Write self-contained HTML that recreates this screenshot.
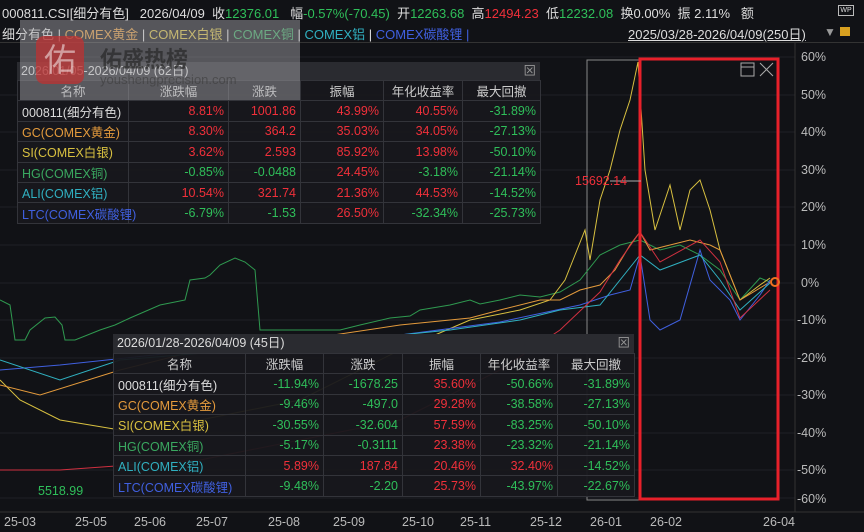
<!DOCTYPE html><html><head><meta charset="utf-8"><style>
*{margin:0;padding:0;box-sizing:border-box}
body{width:864px;height:532px;background:#111216;font-family:"Liberation Sans","Noto Sans CJK SC",sans-serif;color:#ddd;position:relative;overflow:hidden;font-size:12px}
.a{position:absolute;white-space:nowrap}
.g{color:#2fbf5a}.r{color:#f0303a}
table{border-collapse:collapse;position:absolute;background:rgba(24,24,28,.95);font-size:12.5px;table-layout:fixed}
td{border:1px solid #33343a;height:20.4px;padding:0 4px;text-align:right;white-space:nowrap;overflow:hidden}
td:first-child{text-align:left}
tr.h td{text-align:center;color:#ccc}
.tt{position:absolute;background:#2a2b30;color:#ddd;font-size:12.5px;padding-left:4px;line-height:18px}
.ax{color:#bbb;font-size:12.5px}
</style></head><body>
<div class="a" style="left:2px;top:3px;font-size:13px">000811.CSI[细分有色] &nbsp; 2026/04/09 &nbsp;收<span class="g">12376.01</span> &nbsp; 幅<span class="g">-0.57%(-70.45)</span> &nbsp;开<span class="g">12263.68</span> &nbsp;高<span class="r">12494.23</span> &nbsp;低<span class="g">12232.08</span> &nbsp;换0.00% &nbsp;振 2.11% &nbsp; 额</div>
<div class="a" style="left:2px;top:24px;font-size:13px">细分有色 | <span style="color:#e39a3c">COMEX黄金</span> | <span style="color:#d8c040">COMEX白银</span> | <span style="color:#3aa860">COMEX铜</span> | <span style="color:#30b0c0">COMEX铝</span> | <span style="color:#4060e0">COMEX碳酸锂</span> <span style="color:#4060e0">|</span></div>
<div class="a" style="left:628px;top:24px;font-size:13px;text-decoration:underline">2025/03/28-2026/04/09(250日)</div>
<div class="a" style="left:824px;top:25px;color:#999">▼</div>
<div class="a" style="left:840px;top:27px;width:10px;height:9px;background:#d8a020"></div>
<div class="a" style="left:838px;top:5px;width:16px;height:11px;border:1px solid #bbb;font-size:7px;line-height:9px;text-align:center">WP</div>
<div class="a" style="left:0;top:42px;width:864px;height:1px;background:#333"></div>
<svg class="a" style="left:0;top:0" width="864" height="532">
<g stroke="#1f2025" stroke-width="1">
<line x1="0" y1="57" x2="795" y2="57"/><line x1="0" y1="95" x2="795" y2="95"/><line x1="0" y1="132" x2="795" y2="132"/><line x1="0" y1="170" x2="795" y2="170"/><line x1="0" y1="207" x2="795" y2="207"/><line x1="0" y1="245" x2="795" y2="245"/><line x1="0" y1="283" x2="795" y2="283"/><line x1="0" y1="320" x2="795" y2="320"/><line x1="0" y1="358" x2="795" y2="358"/><line x1="0" y1="395" x2="795" y2="395"/><line x1="0" y1="433" x2="795" y2="433"/><line x1="0" y1="470" x2="795" y2="470"/><line x1="0" y1="498" x2="795" y2="498"/>
</g>
<line x1="795" y1="42" x2="795" y2="512" stroke="#333"/><line x1="0" y1="512" x2="864" y2="512" stroke="#333"/>
<rect x="587" y="60" width="53" height="440" fill="none" stroke="#888"/>
<polyline fill="none" stroke="#2f9a50" points="0,300 10,305 15,340 25,340 30,330 45,318 55,317 62,325 65,340 75,340 100,330 115,325 130,318 160,305 175,302 185,300 190,280 205,278 210,275 220,265 235,258 245,262 255,270 260,330 340,330 360,325 390,318 410,316 420,310 450,305 470,300 480,304 500,300 520,295 540,297 560,292 580,280 600,255 620,245 640,240 660,250 680,245 700,255 720,270 740,300 760,278 770,282"/>
<polyline fill="none" stroke="#d8c040" points="0,380 20,400 60,420 120,430 200,420 300,400 400,350 470,320 520,310 550,300 565,280 575,255 585,230 590,260 600,200 610,170 620,130 630,100 638,62 645,170 655,230 670,185 680,230 690,190 700,180 710,210 720,250 740,300 760,285 770,278"/>
<polyline fill="none" stroke="#e39a3c" points="0,385 40,395 120,370 200,350 300,340 400,325 470,318 500,310 540,300 560,300 580,290 600,285 615,270 630,245 640,232 650,250 670,245 690,240 710,245 720,250 740,300 770,282"/>
<polyline fill="none" stroke="#4060e0" points="0,370 60,365 200,350 400,335 500,322 580,305 610,295 630,290 640,255 650,320 660,330 680,320 700,250 710,280 730,300 740,320 760,295 770,280"/>
<polyline fill="none" stroke="#30b0c0" points="0,360 60,380 120,360 300,345 450,330 520,320 560,310 600,305 640,255 660,270 700,255 720,280 740,310 770,283"/>
<polyline fill="none" stroke="#d03040" points="0,470 60,470 200,460 400,420 500,370 560,330 600,292 620,260 640,232 660,262 700,240 720,262 740,318 770,290"/>
<rect x="640" y="59" width="138" height="440" fill="none" stroke="#e8202a" stroke-width="3"/>
<rect x="741" y="63" width="13" height="13" fill="none" stroke="#aaa"/><line x1="741" y1="67" x2="754" y2="67" stroke="#aaa"/>
<path d="M760 63l13 13M773 63l-13 13" stroke="#aaa"/>
<line x1="610" y1="181" x2="641" y2="181" stroke="#aaa"/>
<circle cx="775" cy="282" r="4" fill="none" stroke="#f07020" stroke-width="2"/>
</svg>
<div class="a" style="left:575px;top:174px;color:#f0303a;font-size:12.5px">15692.14</div>
<div class="a" style="left:38px;top:484px;color:#2fbf5a;font-size:12.5px">5518.99</div>
<div class="a ax" style="left:801px;top:50px">60%</div><div class="a ax" style="left:801px;top:88px">50%</div><div class="a ax" style="left:801px;top:125px">40%</div><div class="a ax" style="left:801px;top:163px">30%</div><div class="a ax" style="left:801px;top:200px">20%</div><div class="a ax" style="left:801px;top:238px">10%</div><div class="a ax" style="left:801px;top:276px">0%</div><div class="a ax" style="left:797px;top:313px">-10%</div><div class="a ax" style="left:797px;top:351px">-20%</div><div class="a ax" style="left:797px;top:388px">-30%</div><div class="a ax" style="left:797px;top:426px">-40%</div><div class="a ax" style="left:797px;top:463px">-50%</div><div class="a ax" style="left:797px;top:492px">-60%</div>
<div class="a ax" style="top:515px;left:4px">25-03</div><div class="a ax" style="top:515px;left:75px">25-05</div><div class="a ax" style="top:515px;left:134px">25-06</div><div class="a ax" style="top:515px;left:196px">25-07</div><div class="a ax" style="top:515px;left:268px">25-08</div><div class="a ax" style="top:515px;left:333px">25-09</div><div class="a ax" style="top:515px;left:402px">25-10</div><div class="a ax" style="top:515px;left:460px">25-11</div><div class="a ax" style="top:515px;left:530px">25-12</div><div class="a ax" style="top:515px;left:590px">26-01</div><div class="a ax" style="top:515px;left:650px">26-02</div><div class="a ax" style="top:515px;left:763px">26-04</div>

<div class="tt" style="left:17px;top:62px;width:523px">2026/01/05-2026/04/09 (62日)<span style="float:right;margin-right:4px;color:#999">⊠</span></div>
<table style="left:17px;top:80px;width:523px">
<colgroup><col style="width:111px"><col style="width:100px"><col style="width:72px"><col style="width:83px"><col style="width:79px"><col style="width:78px"></colgroup>
<tr class="h"><td>名称</td><td>涨跌幅</td><td>涨跌</td><td>振幅</td><td>年化收益率</td><td>最大回撤</td></tr>
<tr><td>000811(细分有色)</td><td class="r">8.81%</td><td class="r">1001.86</td><td class="r">43.99%</td><td class="r">40.55%</td><td class="g">-31.89%</td></tr>
<tr><td style="color:#e39a3c">GC(COMEX黄金)</td><td class="r">8.30%</td><td class="r">364.2</td><td class="r">35.03%</td><td class="r">34.05%</td><td class="g">-27.13%</td></tr>
<tr><td style="color:#d8c040">SI(COMEX白银)</td><td class="r">3.62%</td><td class="r">2.593</td><td class="r">85.92%</td><td class="r">13.98%</td><td class="g">-50.10%</td></tr>
<tr><td style="color:#3aa860">HG(COMEX铜)</td><td class="g">-0.85%</td><td class="g">-0.0488</td><td class="r">24.45%</td><td class="g">-3.18%</td><td class="g">-21.14%</td></tr>
<tr><td style="color:#30b0c0">ALI(COMEX铝)</td><td class="r">10.54%</td><td class="r">321.74</td><td class="r">21.36%</td><td class="r">44.53%</td><td class="g">-14.52%</td></tr>
<tr><td style="color:#4060e0;overflow:visible">LTC(COMEX碳酸锂)</td><td class="g">-6.79%</td><td class="g">-1.53</td><td class="r">26.50%</td><td class="g">-32.34%</td><td class="g">-25.73%</td></tr>
</table>

<div class="tt" style="left:113px;top:334px;width:521px;line-height:19px">2026/01/28-2026/04/09 (45日)<span style="float:right;margin-right:4px;color:#999">⊠</span></div>
<table style="left:113px;top:353px;width:521px">
<colgroup><col style="width:132px"><col style="width:78px"><col style="width:79px"><col style="width:78px"><col style="width:77px"><col style="width:77px"></colgroup>
<tr class="h"><td>名称</td><td>涨跌幅</td><td>涨跌</td><td>振幅</td><td>年化收益率</td><td>最大回撤</td></tr>
<tr><td>000811(细分有色)</td><td class="g">-11.94%</td><td class="g">-1678.25</td><td class="r">35.60%</td><td class="g">-50.66%</td><td class="g">-31.89%</td></tr>
<tr><td style="color:#e39a3c">GC(COMEX黄金)</td><td class="g">-9.46%</td><td class="g">-497.0</td><td class="r">29.28%</td><td class="g">-38.58%</td><td class="g">-27.13%</td></tr>
<tr><td style="color:#d8c040">SI(COMEX白银)</td><td class="g">-30.55%</td><td class="g">-32.604</td><td class="r">57.59%</td><td class="g">-83.25%</td><td class="g">-50.10%</td></tr>
<tr><td style="color:#3aa860">HG(COMEX铜)</td><td class="g">-5.17%</td><td class="g">-0.3111</td><td class="r">23.38%</td><td class="g">-23.32%</td><td class="g">-21.14%</td></tr>
<tr><td style="color:#30b0c0">ALI(COMEX铝)</td><td class="r">5.89%</td><td class="r">187.84</td><td class="r">20.46%</td><td class="r">32.40%</td><td class="g">-14.52%</td></tr>
<tr><td style="color:#4060e0">LTC(COMEX碳酸锂)</td><td class="g">-9.48%</td><td class="g">-2.20</td><td class="r">25.73%</td><td class="g">-43.97%</td><td class="g">-22.67%</td></tr>
</table>

<div class="a" style="left:20px;top:20px;width:280px;height:80px;background:rgba(170,170,175,.45)"></div>
<div class="a" style="left:36px;top:36px;width:48px;height:48px;background:rgba(190,50,50,.75);border-radius:8px;color:rgba(255,255,255,.5);font-size:32px;line-height:48px;text-align:center">佑</div>
<div class="a" style="left:100px;top:42px;font-size:22px;font-weight:bold;color:rgba(40,40,40,.7)">佑盛热榜</div>
<div class="a" style="left:100px;top:72px;font-size:13px;color:rgba(60,60,60,.6)">youshengprecision.com</div>
</body></html>
